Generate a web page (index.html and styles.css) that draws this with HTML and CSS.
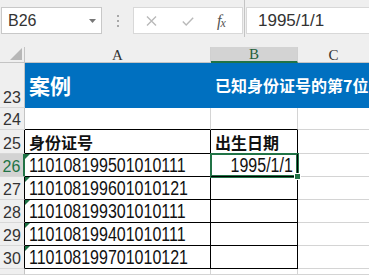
FILE: index.html
```html
<!DOCTYPE html>
<html lang="zh-CN">
<head>
<meta charset="utf-8">
<title>身份证号 出生日期</title>
<link rel="stylesheet" href="styles.css">
</head>
<body>
<div class="app">
  <div class="formula-bar">
    <div class="namebox">
      <span class="name">B26</span>
      <svg class="caret" width="7" height="4" viewBox="0 0 7 4"><path d="M0 0H7L3.5 4Z" fill="#777"/></svg>
    </div>
    <div class="dots"><i></i><i></i><i></i></div>
    <div class="actions">
      <svg class="ic-x" width="11" height="10" viewBox="0 0 11 10"><path d="M1 0.5L10 9.5M10 0.5L1 9.5" stroke="#b9b9b9" stroke-width="1.4" fill="none"/></svg>
      <svg class="ic-ok" width="12" height="9" viewBox="0 0 12 9"><path d="M0.8 4.6L4.2 8L11.2 0.8" stroke="#b9b9b9" stroke-width="1.4" fill="none"/></svg>
      <span class="fx">f<span class="fx-x">x</span></span>
    </div>
    <div class="splitter"><i></i></div>
    <div class="input">1995/1/1</div>
  </div>

  <div class="sheet">
    <div class="corner"><svg width="12" height="12" viewBox="0 0 12 12"><path d="M12 0V12H0Z" fill="#b7b7b7"/></svg></div>
    <div class="ch">A</div>
    <div class="ch ch-sel">B</div>
    <div class="ch ch-last">C</div>

    <div class="rh">23</div>
    <div class="c title"><span class="t1">案例</span></div>
    <div class="c title title-span"><span class="t2">已知身份证号的第7位到第14位是出生日期</span></div>

    <div class="rh">24</div>
    <div class="c top-edge"></div>
    <div class="c top-edge"></div>
    <div class="c last"></div>

    <div class="rh rh-tbl">25</div>
    <div class="c tb"><span class="hd">身份证号</span></div>
    <div class="c tb"><span class="hd">出生日期</span></div>
    <div class="c last"></div>

    <div class="rh rh-sel">26</div>
    <div class="c tb flag"><span class="d">110108199501010111</span></div>
    <div class="c tb num sel"><span class="d dr">1995/1/1</span></div>
    <div class="c last"></div>

    <div class="rh rh-tbl">27</div>
    <div class="c tb flag"><span class="d">110108199601010121</span></div>
    <div class="c tb"></div>
    <div class="c last"></div>

    <div class="rh rh-tbl">28</div>
    <div class="c tb flag"><span class="d">110108199301010111</span></div>
    <div class="c tb"></div>
    <div class="c last"></div>

    <div class="rh rh-tbl">29</div>
    <div class="c tb flag"><span class="d">110108199401010111</span></div>
    <div class="c tb"></div>
    <div class="c last"></div>

    <div class="rh rh-tbl">30</div>
    <div class="c tb flag"><span class="d">110108199701010121</span></div>
    <div class="c tb"></div>
    <div class="c last"></div>

    <div class="rh"></div>
    <div class="c"></div>
    <div class="c"></div>
    <div class="c last"></div>
  </div>
</div>
</body>
</html>
```

FILE: styles.css
```css
html, body {
  margin: 0;
  padding: 0;
  background: #ffffff;
}

body {
  width: 369px;
  height: 275px;
  overflow: hidden;
  font-family: "Liberation Sans", Arial, "Noto Sans CJK SC", sans-serif;
  color: #222222;
}

.formula-bar {
  display: flex;
  align-items: flex-start;
  height: 47px;
  background: #efefef;
}

.namebox {
  box-sizing: border-box;
  margin: 7px 0 0 1px;
  width: 101px;
  height: 27px;
  background: #ffffff;
  border: 1px solid #c8c8c8;
  display: flex;
  align-items: center;
  justify-content: space-between;
  padding: 0 5px 0 6px;
  font-size: 16px;
  color: #333333;
}

.dots {
  margin-top: 7px;
  width: 31px;
  height: 27px;
  display: flex;
  flex-direction: column;
  align-items: center;
  justify-content: center;
  gap: 3px;
}

.dots i {
  display: block;
  width: 2px;
  height: 2px;
  background: #a8a8a8;
}

.actions {
  box-sizing: border-box;
  margin-top: 7px;
  width: 110px;
  height: 27px;
  background: #ffffff;
  border: 1px solid #d8d8d8;
  display: flex;
  align-items: center;
  padding-left: 12px;
}

.ic-x { margin-right: 25px; }
.ic-ok { margin-right: 23px; margin-top: 1px; }

.fx {
  font-family: "Liberation Serif", "Times New Roman", serif;
  font-style: italic;
  font-size: 16px;
  color: #555555;
  letter-spacing: -1px;
}

.fx-x {
  font-size: 12px;
  position: relative;
  top: 1px;
}

.splitter {
  width: 3px;
  height: 37px;
  display: flex;
  justify-content: center;
}

.splitter i {
  display: block;
  width: 1px;
  height: 100%;
  background: #c4c4c4;
}

.input {
  box-sizing: border-box;
  flex: 1;
  margin-top: 7px;
  height: 27px;
  background: #ffffff;
  border: 1px solid #d8d8d8;
  border-right: none;
  display: flex;
  align-items: center;
  padding-left: 11px;
  font-size: 17px;
  color: #333333;
}

.sheet {
  display: grid;
  grid-template-columns: 25px 186px 87px 1fr;
  grid-template-rows: 16px 45px 22px 24px 23px 23px 23px 23px 23px 1fr;
  height: 228px;
}

.corner {
  box-sizing: border-box;
  background: #efefef;
  border-right: 1px solid #c4c4c4;
  border-bottom: 1px solid #c4c4c4;
  display: flex;
  align-items: flex-end;
  justify-content: flex-end;
  padding: 0 2px 2px 0;
}

.ch {
  box-sizing: border-box;
  background: #efefef;
  border-right: 1px solid #d0d0d0;
  border-bottom: 1px solid #c4c4c4;
  display: flex;
  align-items: center;
  justify-content: center;
  font-family: "Liberation Serif", "Times New Roman", serif;
  font-size: 15px;
  color: #333333;
  padding-top: 1px;
}

.ch-sel {
  background: #d3d3d3;
  border-bottom: 2px solid #217346;
  color: #1f5f3a;
}

.ch-last { border-right: none; }

.rh {
  box-sizing: border-box;
  background: #efefef;
  border-right: 1px solid #c4c4c4;
  border-bottom: 1px solid #d8d8d8;
  display: flex;
  align-items: flex-end;
  justify-content: center;
  font-size: 16px;
  line-height: 16px;
  padding-bottom: 1px;
  color: #333333;
  overflow: hidden;
}

.rh-tbl { border-right-color: #000000; }

.rh-sel {
  background: #d3d3d3;
  color: #217346;
  border-right: 2px solid #217346;
}

.c {
  box-sizing: border-box;
  position: relative;
  border-right: 1px solid #d4d4d4;
  border-bottom: 1px solid #d4d4d4;
  display: flex;
  align-items: center;
  padding-left: 4px;
  overflow: hidden;
  white-space: nowrap;
  color: #111111;
}

.c.last { border-right: none; }

.d {
  display: inline-block;
  font-size: 20px;
  line-height: 20px;
  transform: scaleX(0.8);
  transform-origin: left center;
}

.dr { transform-origin: right center; }

.title {
  background: #0070c0;
  border-color: #0070c0;
  color: #ffffff;
  font-family: "Noto Sans CJK SC", sans-serif;
  font-weight: bold;
}

.title-span {
  grid-column: 3 / 5;
  border-right: none;
}

.t1 { font-size: 21px; }
.t2 { font-size: 16px; }

.top-edge { border-bottom-color: #000000; }

.tb {
  border-right-color: #000000;
  border-bottom-color: #000000;
}

.hd {
  font-family: "Noto Sans CJK SC", sans-serif;
  font-weight: bold;
  font-size: 16px;
  color: #111111;
}

.num {
  justify-content: flex-end;
  padding-right: 4px;
}

.flag::before {
  content: "";
  position: absolute;
  top: 0;
  left: 0;
  border-top: 5px solid #1e7145;
  border-right: 5px solid transparent;
}

.sel {
  overflow: visible;
  z-index: 1;
  box-shadow: 0 0 0 1px #217346, inset 0 0 0 1px #217346;
}

.sel::after {
  content: "";
  position: absolute;
  right: -4px;
  bottom: -4px;
  width: 5px;
  height: 5px;
  background: #217346;
  border: 1px solid #ffffff;
}
```
